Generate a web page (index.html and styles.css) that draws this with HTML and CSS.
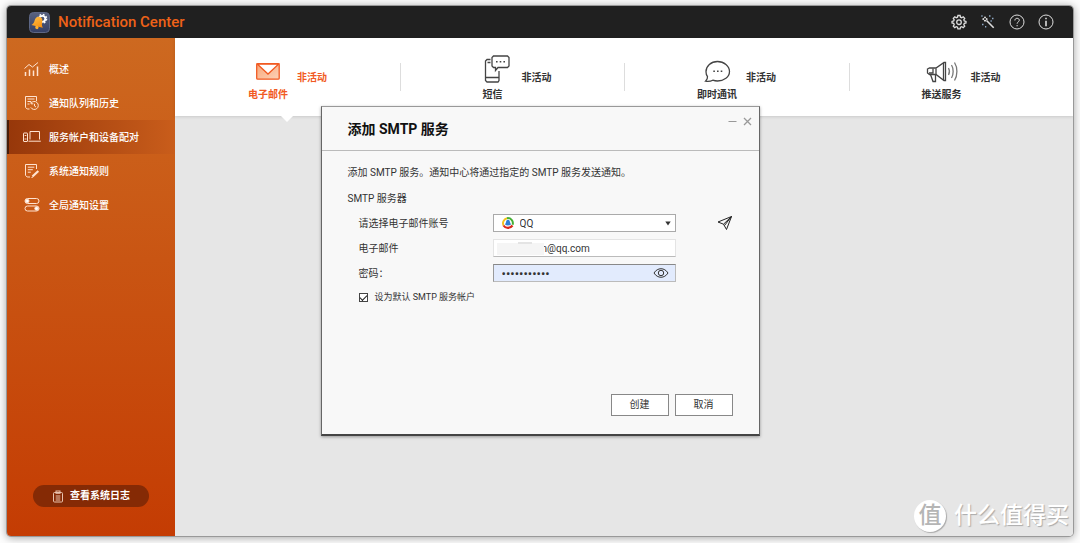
FILE: index.html
```html
<!DOCTYPE html>
<html lang="zh-CN">
<head>
<meta charset="utf-8">
<title>Notification Center</title>
<link rel="stylesheet" href="styles.css">
</head>
<body>
<div class="window">
  <header class="topbar">
    <svg class="app-icon" width="21" height="21" viewBox="0 0 21 21" aria-hidden="true">
      <defs>
        <linearGradient id="tile" x1="0" y1="0" x2="0" y2="1"><stop offset="0" stop-color="#59627f"/><stop offset="1" stop-color="#343f66"/></linearGradient>
        <linearGradient id="bell" x1="0" y1="0" x2="1" y2="1"><stop offset="0" stop-color="#ffc24a"/><stop offset="1" stop-color="#f58a0c"/></linearGradient>
      </defs>
      <rect x=".5" y=".5" width="20" height="20" rx="4" fill="url(#tile)" stroke="#5d6785"/>
      <circle cx="13.3" cy="6.8" r="3" fill="none" stroke="#fff" stroke-width="1.8"/>
      <circle cx="13.3" cy="6.8" r="4.3" fill="none" stroke="#fff" stroke-width="1.4" stroke-dasharray="1.7 1.68"/>
      <g transform="rotate(14 9 11)"><path d="M9 4.600c-2.600 0-3.900 2-3.900 4.700 0 2.600-.7 3.800-2 5.200h11.800c-1.300-1.400-2-2.600-2-5.200C12.900 6.600 11.600 4.600 9 4.600z" fill="url(#bell)"/><circle cx="9" cy="15.600" r="1.700" fill="#ffb02e"/></g>
    </svg>
    <h1 class="brand">Notification Center</h1>
    <nav class="tools">
      <button type="button" class="tool" aria-label="设置">
        <svg width="16" height="16" viewBox="0 0 16 16" stroke-width="1.3"><path d="M6.900 1.500h2.200l.4 1.700 1.200.5 1.500-.9 1.500 1.500-.9 1.500.5 1.200 1.700.4v1.600l-1.700.4-.5 1.200.9 1.500-1.500 1.500-1.500-.9-1.200.5-.4 1.700H6.900l-.4-1.700-1.200-.5-1.500.9-1.500-1.500.9-1.500-.5-1.200L1 9V7.400L2.700 7l.5-1.200-.9-1.500 1.500-1.500 1.500.9 1.200-.5z"/><circle cx="8" cy="8.200" r="2.300"/></svg>
      </button>
      <button type="button" class="tool" aria-label="向导">
        <svg width="16" height="16" viewBox="0 0 16 16"><path d="M6.500 6.500l7.200 7.200" stroke-width="1.600"/><path d="M5 2.700l.8 1.600 1.700.8-1.700.8L5 7.500l-.8-1.600-1.700-.8 1.700-.8z"/><path d="M9 2h1.500M12 4.500h1.500M10.500 7h1.300M2 10.500h1.500M5 12.800h1.300M1.300 2h1.300" stroke="#8fa9c4" stroke-width="1.400"/></svg>
      </button>
      <button type="button" class="tool" aria-label="帮助">
        <svg width="16" height="16" viewBox="0 0 16 16"><circle cx="8" cy="8" r="7"/><path d="M5.900 6.500c0-1.400.9-2.200 2.200-2.200s2.200.8 2.200 2c0 1.600-2.200 1.700-2.200 3.400"/><path d="M8.100 11v1.300"/></svg>
      </button>
      <button type="button" class="tool" aria-label="信息">
        <svg width="16" height="16" viewBox="0 0 16 16"><circle cx="8" cy="8" r="7"/><path d="M8 3.800v1.500M8 6.700v5.500" stroke-width="1.600"/></svg>
      </button>
    </nav>
  </header>

  <div class="main">
    <aside class="sidebar">
      <nav class="menu">
        <a class="item" href="#overview">
          <svg width="18" height="16" viewBox="0 0 18 16"><path d="M2.500 11v4M6.500 8.500v6.500M10.500 9.500V15M14.500 5.500V15" stroke-width="1.500"/><path d="M1.500 7.500L6 3.500 9.500 6 15 1.500"/></svg>
          <span>概述</span>
        </a>
        <a class="item" href="#queue">
          <svg width="18" height="16" viewBox="0 0 18 16"><path d="M6.500 14H4.200L2.500 12.300V1.500h11v4.500"/><path d="M4.500 4h7M4.500 6.500h3.500M4.500 9h2"/><path d="M8 8.200a4 4 0 1 1-.2 4.200M8 6.500v2.300h2.300M11.500 8.800v2.200l1.500 1"/></svg>
          <span>通知队列和历史</span>
        </a>
        <a class="item active" href="#accounts" aria-current="page">
          <svg width="18" height="16" viewBox="0 0 18 16"><rect x=".5" y="4" width="4" height="8.500" rx=".5"/><path d="M1.500 10h2M1.700 6.500h1.600"/><path d="M7 10.500v-8h9.500v8M5.500 12.200h12.300"/></svg>
          <span>服务帐户和设备配对</span>
        </a>
        <a class="item" href="#rules">
          <svg width="18" height="16" viewBox="0 0 18 16"><path d="M7 14H4.200L2.500 12.300V1.500h11V6"/><path d="M4.800 4.200h6.500M4.800 6.700h5M4.800 9.200h3"/><path d="M9.500 13.500l5.800-5.500" stroke-width="2.200"/><path d="M8.500 14.500l1.500-.5"/></svg>
          <span>系统通知规则</span>
        </a>
        <a class="item" href="#global">
          <svg width="18" height="16" viewBox="0 0 18 16"><rect x="2" y="1.500" width="14" height="5" rx="2.500"/><rect x="2" y="9" width="14" height="5" rx="2.500"/><circle cx="4.300" cy="4" r="1.700" fill="#fff"/><circle cx="13.500" cy="11.500" r="1.700" fill="#fff"/></svg>
          <span>全局通知设置</span>
        </a>
      </nav>
      <button type="button" class="log-button">
        <svg width="12" height="13" viewBox="0 0 12 13"><rect x="1.500" y="2.500" width="9" height="9.500" rx="1"/><rect x="4" y="1" width="4" height="2.300"/><path d="M3.700 6h4.600M3.700 8h4.600M3.700 10h4.600"/></svg>
        查看系统日志
      </button>
    </aside>

    <div class="content">
      <nav class="tabs">
        <a class="tab selected" href="#email" aria-current="page">
          <span class="kind">
            <svg width="34" height="28" viewBox="0 0 34 28"><defs><linearGradient id="mail" x1="0" y1="0" x2="1" y2="1"><stop offset="0" stop-color="#f9a678"/><stop offset="1" stop-color="#fcd2b8"/></linearGradient></defs><rect x="5.700" y="8.700" width="22.500" height="15.500" rx="1" fill="url(#mail)"/><path d="M6.500 9.200L17 19 27.500 9.200z" fill="#fff"/></svg>
            <span>电子邮件</span>
          </span>
          <span class="status">非活动</span>
        </a>
        <a class="tab" href="#sms">
          <span class="kind">
            <svg width="34" height="28" viewBox="0 0 34 28"><path d="M14.500 4.500H11L9.500 6v19.500L11 27h11l1-1.500V16M9.500 22.500H23M11.500 7.500h3"/><path d="M17.500 1h14l1.500 1.500v8.500L31.500 12.500H22l-2.500 3v-3h-2L16 11V2.500z"/><path d="M20 6.800h1.600M23.700 6.800h1.600M27.400 6.800H29" stroke-width="1.600"/></svg>
            <span>短信</span>
          </span>
          <span class="status">非活动</span>
        </a>
        <a class="tab" href="#im">
          <span class="kind">
            <svg width="34" height="28" viewBox="0 0 34 28"><path d="M5.500 26.200c1.500-1.500 2.200-2.500 2-4.500-1-1.400-1.500-3-1.500-5C6 11 11 6.500 17.500 6.500S29.500 11 29.500 16.500 24 26 17.500 26c-1.800 0-3.300-.3-4.700-.8-1.800 1-4.500 1.500-7.300 1z"/><path d="M13.300 16.200h1.600M17 16.200h1.600M20.700 16.200h1.600" stroke-width="1.600"/></svg>
            <span>即时通讯</span>
          </span>
          <span class="status">非活动</span>
        </a>
        <a class="tab" href="#push">
          <span class="kind">
            <svg width="34" height="28" viewBox="0 0 34 28"><path d="M2.500 14l2-1H11l8-5.500h1.500v18H19l-8-6H4.500l-2-1.500z"/><path d="M8 13.500v4.500H4M18.500 8v17M5.500 19.500L8 26.500h2.500V19.500M11 13.500v6"/><path d="M23.500 13c1 1.800 1 5.200 0 7M26.500 10c2.200 3.500 2.200 9.500 0 13M29.500 7.500c3.200 5 3.200 13 0 18" stroke="#777"/></svg>
            <span>推送服务</span>
          </span>
          <span class="status">非活动</span>
        </a>
      </nav>
    </div>
  </div>

  <div class="watermark" aria-hidden="true"><span class="seal">值</span><span>什么值得买</span></div>

  <div class="overlay">
    <section class="dialog" role="dialog" aria-labelledby="dialog-title">
      <header class="dialog-head">
        <h2 id="dialog-title">添加 SMTP 服务</h2>
        <div class="dialog-controls">
          <button type="button" aria-label="最小化"><svg width="9" height="9" viewBox="0 0 9 9"><path d="M.5 4.500h8"/></svg></button>
          <button type="button" aria-label="关闭"><svg width="9" height="9" viewBox="0 0 9 9"><path d="M1 1l7 7M8 1L1 8" stroke-width="1.300"/></svg></button>
        </div>
      </header>
      <form class="dialog-body">
        <p class="intro">添加 SMTP 服务。通知中心将通过指定的 SMTP 服务发送通知。</p>
        <h3 class="group">SMTP 服务器</h3>
        <div class="row">
          <label for="provider">请选择电子邮件账号</label>
          <div class="field">
            <select id="provider"><option>QQ</option></select>
            <svg class="provider-icon" width="12" height="12" viewBox="0 0 12 12"><circle cx="6" cy="6" r="4.500" fill="#fff"/><path d="M1.600 8.500A5 5 0 0 1 5 1.300" fill="none" stroke="#f2c21d" stroke-width="2"/><path d="M5 1.200a5 5 0 0 1 5.600 6.500" fill="none" stroke="#45b035" stroke-width="2"/><path d="M1.500 8.500c2 3 6.500 3.300 9 0" fill="none" stroke="#d92a1c" stroke-width="2.200"/><path d="M6 2.800c1.500 0 1.800 1.200 2 2.500l1 2.200c-1.500 1.300-4.500 1.300-6 0l1-2.200c.2-1.300.5-2.500 2-2.500z" fill="#2f7fd6"/></svg>
            <svg class="arrow" width="6" height="5" viewBox="0 0 6 5"><path d="M.3.500h5.400L3 4.500z"/></svg>
          </div>
          <button type="button" class="send" aria-label="发送测试邮件"><svg width="16" height="16" viewBox="0 0 16 16"><path d="M14.500 1.500L1 7l5.500 2.200L9.500 14.500zM14.500 1.500l-8 7.700M14.500 1.500L7.500 10.500"/></svg></button>
        </div>
        <div class="row">
          <label for="email">电子邮件</label>
          <div class="field">
            <input id="email" class="email" type="text" value="n@qq.com">
            <span class="mask"></span>
          </div>
        </div>
        <div class="row">
          <label for="password">密码：</label>
          <div class="field">
            <input id="password" class="password" type="password" value="12345678901">
            <button type="button" class="reveal" aria-label="显示密码"><svg width="16" height="12" viewBox="0 0 16 12"><path d="M1 6c3.500-5.700 10.500-5.700 14 0-3.500 5.700-10.500 5.700-14 0z"/><circle cx="8" cy="6" r="2.700"/></svg></button>
          </div>
        </div>
        <label class="default">
          <input type="checkbox" checked>
          <span>设为默认 SMTP 服务帐户</span>
        </label>
        <div class="actions">
          <button type="submit">创建</button>
          <button type="button">取消</button>
        </div>
      </form>
    </section>
  </div>
</div>
</body>
</html>
```
FILE: styles.css
```css
* { box-sizing: border-box; }

body {
  margin: 0;
  padding: 6px 7px 7px;
  background: #fdfdfd;
  color: #333;
  font: 10px/16px Roboto, "Noto Sans CJK SC", sans-serif;
}

button, input, select { font: inherit; color: inherit; }
button { padding: 0; border: 0; background: none; }
a { color: inherit; text-decoration: none; }
h1, h2, h3, p { margin: 0; }
svg { display: block; flex: none; fill: none; stroke: currentColor; }

.window {
  position: relative;
  display: flex;
  flex-direction: column;
  min-height: calc(100vh - 13px);
  border-radius: 4px;
  overflow: hidden;
  box-shadow: 0 0 0 1px #999, 0 1px 8px 1px rgba(0, 0, 0, .35);
}

.topbar {
  display: flex;
  align-items: center;
  gap: 8px;
  height: 32px;
  padding: 0 19px 0 22px;
  background: #202020;
}
.app-icon { stroke: none; }
.brand {
  flex: 1;
  color: #ee6218;
  font-size: 15px;
  font-weight: 500;
}
.tools { display: flex; gap: 13px; color: #ddd; }

.main { flex: 1; display: flex; }

.sidebar {
  display: flex;
  flex-direction: column;
  justify-content: space-between;
  align-items: center;
  width: 168px;
  padding: 14px 0 29px;
  background: linear-gradient(#cd6920, #c43c03);
  color: #fff;
}
.menu { width: 100%; }
.item {
  display: flex;
  align-items: center;
  gap: 8px;
  height: 34px;
  padding-left: 16px;
  font-weight: 500;
}
.item span { padding-top: 1px; }
.item svg { stroke: #ffe3d0; }
.active {
  background: linear-gradient(90deg, #96370a, #c95d1b);
  box-shadow: inset 2px 0 #481c08;
}
.log-button {
  display: flex;
  align-items: center;
  justify-content: center;
  gap: 6px;
  width: 116px;
  height: 22px;
  border-radius: 11px;
  background: #852a05;
  font-size: 10px;
  font-weight: 700;
}
.log-button svg { stroke: #e9c3ae; }

.content { flex: 1; background: #e6e6e6; }
.tabs {
  display: flex;
  height: 78px;
  background: #fff;
  box-shadow: 0 1px 3px rgba(0, 0, 0, .12);
}
.tab {
  position: relative;
  flex: 1;
  display: flex;
  gap: 9px;
  padding: 17px 0 0 73px;
  font-weight: 700;
}
.tab + .tab::before {
  content: "";
  position: absolute;
  left: 0;
  top: 25px;
  height: 28px;
  border-left: 1px solid #ddd;
}
.kind {
  display: flex;
  flex-direction: column;
  align-items: center;
  gap: 4px;
  width: 40px;
}
.kind svg { stroke: #444; stroke-width: 1.3; }
.status { padding-top: 15px; }
.selected { color: #f15a22; }
.selected .kind svg { stroke: #f15a22; }
.selected::after {
  content: "";
  position: absolute;
  left: 50%;
  top: 100%;
  margin-left: -6px;
  border: 6px solid transparent;
  border-top-color: #fff;
  border-bottom: 0;
}

.watermark {
  position: absolute;
  right: 4px;
  bottom: 4px;
  display: flex;
  align-items: center;
  gap: 8px;
  color: #fff;
  font-size: 23px;
  font-weight: 500;
  line-height: 32px;
  text-shadow: 1px 1px 1px #aaa;
}
.seal {
  width: 32px;
  border-radius: 50%;
  background: #fff;
  box-shadow: 1px 1px 1px #aaa;
  color: #b5b5b5;
  text-align: center;
  text-shadow: none;
}

.overlay {
  position: absolute;
  inset: 0;
  display: grid;
  place-items: center;
}
.dialog {
  display: flex;
  flex-direction: column;
  width: 439px;
  min-height: 330px;
  border: 1px solid #666;
  border-top-color: #999;
  border-bottom: 2px solid #444;
  background: #f8f8f8;
  box-shadow: 0 1px 3px rgba(0, 0, 0, .35);
}
.dialog-head {
  display: flex;
  justify-content: space-between;
  height: 44px;
  padding: 0 7px 0 26px;
  border-bottom: 1px solid #bbb;
}
.dialog-head h2 {
  color: #111;
  font-size: 14px;
  font-weight: 700;
  line-height: 45px;
}
.dialog-controls {
  display: flex;
  gap: 6px;
  align-self: flex-start;
  padding-top: 10px;
  color: #999;
}
.dialog-body {
  flex: 1;
  display: flex;
  flex-direction: column;
  padding: 14px 26px 18px;
}
.group {
  margin: 10px 0 7px;
  font-size: 10px;
  font-weight: 400;
}
.row {
  display: flex;
  align-items: center;
  height: 18px;
  margin-bottom: 7px;
  padding-left: 11px;
}
.row label { width: 134px; padding-top: 2px; }
.field { position: relative; width: 183px; }
.field select,
.field input {
  display: block;
  appearance: none;
  width: 100%;
  height: 18px;
  margin: 0;
  padding: 0 8px;
  border: 1px solid #aaa;
  border-radius: 0;
  background: #fff;
}
.field select { padding: 1px 8px 0 26px; }
.field .email { padding-left: 48px; border-color: #e4e4e4 #e4e4e4 #bbb; }
.field .password { font-size: 13px; background: #e2ebfd; border-color: #888 #bbb #bbb #999; }
.provider-icon { position: absolute; left: 9px; top: 3px; stroke: none; }
.arrow { position: absolute; right: 5px; top: 7px; fill: #333; stroke: none; pointer-events: none; }
.mask { position: absolute; left: 4px; top: 4px; width: 47px; height: 12px; background: #f5f5f5; }
.mask::before {
  content: "";
  position: absolute;
  left: 21px;
  top: -1px;
  width: 14px;
  height: 2px;
  background: #e4e4e4;
}
.reveal { position: absolute; right: 7px; top: 3px; }
.send { margin-left: auto; color: #222; }

.default {
  display: flex;
  align-items: center;
  gap: 7px;
  padding-left: 11px;
  font-size: 9px;
}
.default input {
  appearance: none;
  display: grid;
  place-items: center;
  width: 9px;
  height: 9px;
  margin: 0;
  border: 1px solid #444;
  background: #fff;
}
.default input:checked::before {
  content: "";
  width: 6px;
  height: 3px;
  border: solid #222;
  border-width: 0 0 1px 1px;
  transform: rotate(-45deg);
}
.actions {
  display: flex;
  justify-content: flex-end;
  gap: 6px;
  margin-top: auto;
}
.actions button {
  width: 58px;
  height: 22px;
  border: 1px solid #888;
  background: #fff;
}
```
